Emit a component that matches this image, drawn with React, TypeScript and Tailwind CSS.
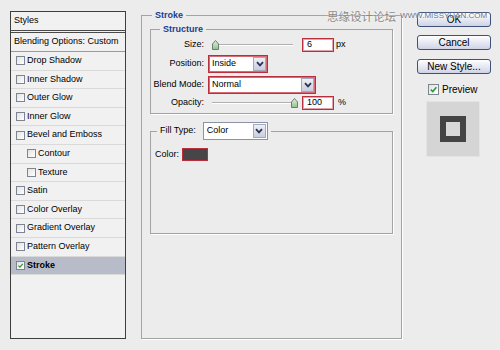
const styleRows: { label: string; indent?: boolean; checked?: boolean }[] = [
  { label: 'Drop Shadow' },
  { label: 'Inner Shadow' },
  { label: 'Outer Glow' },
  { label: 'Inner Glow' },
  { label: 'Bevel and Emboss' },
  { label: 'Contour', indent: true },
  { label: 'Texture', indent: true },
  { label: 'Satin' },
  { label: 'Color Overlay' },
  { label: 'Gradient Overlay' },
  { label: 'Pattern Overlay' },
  { label: 'Stroke', checked: true },
];

function CheckBox({ checked, size = 'sm' }: { checked?: boolean; size?: 'sm' | 'md' }) {
  return (
    <span
      className={`${size === 'sm' ? 'w-[9px] h-[9px]' : 'w-[11px] h-[11px]'} shrink-0 border border-[#7f8590] bg-gradient-to-br from-[#e2e2e2] to-white flex items-center justify-center`}
    >
      {checked && (
        <svg viewBox="0 0 10 10" className="w-full h-full">
          <path d="M2 5.2 L4.2 7.3 L8.2 2.6" fill="none" stroke="#2f9a3a" strokeWidth="1.8" />
        </svg>
      )}
    </span>
  );
}

function StylesList() {
  return (
    <div className="ml-[10px] mt-[11px] w-[116px] h-[328px] border border-[#3f3f3f] bg-[#f1f1f1] flex flex-col">
      <div className="h-[21px] pl-[3px] flex items-center border-b-[3px] border-double border-[#4a4a4a]">Styles</div>
      <div className="h-[19px] pl-[3px] flex items-center border-b border-[#9a9a9a]">Blending Options: Custom</div>
      {styleRows.map((row) => (
        <div
          key={row.label}
          className={`h-[18.6px] flex items-center gap-[2px] border-b border-[#dadada] ${row.indent ? 'pl-[16px]' : 'pl-[5px]'} ${row.checked ? 'bg-[#b8bcc8] font-bold' : ''}`}
        >
          <CheckBox checked={row.checked} />
          <span>{row.label}</span>
        </div>
      ))}
    </div>
  );
}

function Slider({ thumbAt }: { thumbAt: 'start' | 'end' }) {
  return (
    <div className="ml-[8px] w-[86px] h-[14px] flex items-center">
      {thumbAt === 'end' && <div className="flex-1 h-[2px] border-t border-[#b0b0b0] border-b border-b-white" />}
      <svg width="7" height="10" viewBox="0 0 7 10" className="shrink-0">
        <defs>
          <linearGradient id={`thumb-${thumbAt}`} x1="0" y1="0" x2="0" y2="1">
            <stop offset="0" stopColor="#e4f2e0" />
            <stop offset="1" stopColor="#8fc08c" />
          </linearGradient>
        </defs>
        <polygon points="0.5,4 3.5,0.5 6.5,4 6.5,9.5 0.5,9.5" fill={`url(#thumb-${thumbAt})`} stroke="#6d7d70" strokeWidth="1" />
      </svg>
      {thumbAt === 'start' && <div className="flex-1 mr-[5px] h-[2px] border-t border-[#b0b0b0] border-b border-b-white" />}
    </div>
  );
}

function NumberBox({ value }: { value: string }) {
  return (
    <div className="ml-[4px] w-[32px] h-[14px] border border-[#b8303e] shadow-[inset_0_0_0_1px_#e3a2a9] bg-white pl-[4px] flex items-center">
      {value}
    </div>
  );
}

function Select({ value, width, red = true }: { value: string; width: string; red?: boolean }) {
  return (
    <div
      className={`${width} h-[18px] flex items-stretch bg-white ${red ? 'border border-[#b8303e] shadow-[inset_0_0_0_1px_#d86a75]' : 'border border-[#8c93a6]'} p-[1px]`}
    >
      <span className="flex-1 flex items-center pl-[2px]">{value}</span>
      <span className="w-[13px] bg-gradient-to-b from-[#eef0f6] to-[#c8cdde] border border-[#a3aac0] flex items-center justify-center">
        <svg width="8" height="6" viewBox="0 0 8 6">
          <path d="M1 1.2 L4 4.4 L7 1.2" fill="none" stroke="#2b3352" strokeWidth="1.8" />
        </svg>
      </span>
    </div>
  );
}

function Label({ children }: { children: string }) {
  return <span className="w-[53px] text-right">{children}</span>;
}

function StrokePanel() {
  return (
    <fieldset className="ml-[15px] mt-[10px] w-[261px] h-[329px] border border-[#a3a3a3] shadow-[1px_1px_0_#fff] px-[8px]">
      <legend className="ml-[2px] px-[3px] h-[11px] leading-[11px] font-bold text-[#1d3d8f]">Stroke</legend>

      <fieldset className="mt-[3px] h-[90px] border border-[#a3a3a3] shadow-[1px_1px_0_#fff] pb-[3px]">
        <legend className="ml-[9px] px-[3px] h-[11px] leading-[11px] font-bold text-[#1d3d8f]">Structure</legend>
        <div className="flex flex-col gap-[3px] pt-[3px]">
          <div className="h-[14px] flex items-center">
            <Label>Size:</Label>
            <Slider thumbAt="start" />
            <NumberBox value="6" />
            <span className="ml-[2px]">px</span>
          </div>
          <div className="flex items-center">
            <Label>Position:</Label>
            <span className="ml-[4px]">
              <Select value="Inside" width="w-[60px]" />
            </span>
          </div>
          <div className="flex items-center">
            <Label>Blend Mode:</Label>
            <span className="ml-[4px]">
              <Select value="Normal" width="w-[108px]" />
            </span>
          </div>
          <div className="h-[14px] flex items-center -mt-[1px]">
            <Label>Opacity:</Label>
            <Slider thumbAt="end" />
            <NumberBox value="100" />
            <span className="ml-[4px]">%</span>
          </div>
        </div>
      </fieldset>

      <fieldset className="mt-[8px] h-[112px] border border-[#a3a3a3] shadow-[1px_1px_0_#fff]">
        <legend className="ml-[6px] px-[3px] flex items-center gap-[7px]">
          <span>Fill Type:</span>
          <Select value="Color" width="w-[65px]" red={false} />
        </legend>
        <div className="mt-[8px] pl-[4px] flex items-center gap-[3px]">
          <span>Color:</span>
          <span className="w-[26px] h-[13px] bg-[#474545] border border-[#b8303e]" />
        </div>
      </fieldset>
    </fieldset>
  );
}

function Button({ children }: { children: string }) {
  return (
    <button className="w-[74px] h-[15px] rounded-[3px] border border-[#3e5179] bg-gradient-to-b from-white to-[#cfd3e6] text-[10px] leading-none text-black flex items-center justify-center">
      {children}
    </button>
  );
}

function ActionColumn() {
  return (
    <div className="ml-[15px] mt-[12px] w-[74px] flex flex-col">
      <Button>OK</Button>
      <div className="mt-[8px]">
        <Button>Cancel</Button>
      </div>
      <div className="mt-[9px]">
        <Button>New Style...</Button>
      </div>
      <div className="mt-[8px] pl-[11px] flex items-center gap-[3px] text-[10px]">
        <CheckBox checked size="md" />
        <span>Preview</span>
      </div>
      <div className="mt-[4px] ml-[9px] w-[54px] h-[56px] bg-[#d5d5d5] border border-[#e4e4e4] flex items-center justify-center">
        <div className="w-[26px] h-[26px] border-[6px] border-[#444] bg-[#d9d9d9]" />
      </div>
    </div>
  );
}

export default function App() {
  return (
    <div className="relative w-[500px] h-[350px] bg-[#ececec] flex items-start overflow-hidden font-['Liberation_Sans',Arial,sans-serif] text-[9px] text-black">
      <StylesList />
      <StrokePanel />
      <ActionColumn />
      {/* site watermark drawn over the dialog */}
      <div className="absolute z-10 top-[8px] left-[327px] flex items-center gap-[4px] whitespace-nowrap text-[#8a8a8a] [text-shadow:0_0_2px_#fff]">
        <span className="font-['Noto_Sans_CJK_SC',sans-serif] text-[11.5px] leading-[14px]">思缘设计论坛</span>
        <span className="text-[8px] leading-[14px] text-[#6f7480] mt-[1px]">WWW.MISSYUAN.COM</span>
      </div>
    </div>
  );
}
